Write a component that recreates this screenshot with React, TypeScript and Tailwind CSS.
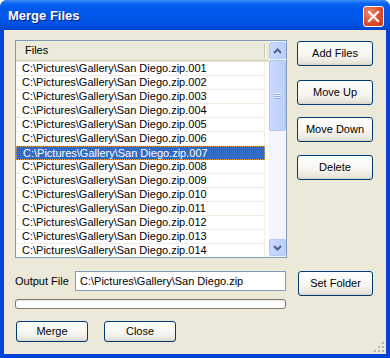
import React from "react";

const rows = Array.from({ length: 14 }, (_, i) => `C:\\Pictures\\Gallery\\San Diego.zip.${String(i + 1).padStart(3, "0")}`);

function XPButton({ label, className }: { label: string; className: string }) {
  return (
    <div
      className={`flex items-center justify-center rounded-[3px] border border-[#003c74] bg-[linear-gradient(to_bottom,#ffffff_0%,#f6f5f0_60%,#e8e5da_90%,#d6d0c5_100%)] text-[11px] text-black ${className}`}
    >
      {label}
    </div>
  );
}

export default function App() {
  return (
    <div
      className="flex h-[358px] w-[390px] flex-col overflow-hidden rounded-t-[7px] bg-[#0542d8]"
      style={{ fontFamily: '"Liberation Sans", Arial, sans-serif' }}
    >
      {/* Title bar */}
      <div className="relative flex h-[30px] shrink-0 items-center rounded-t-[7px] bg-[linear-gradient(to_bottom,#3c8ef8_0%,#0a62f0_12%,#0058ee_30%,#0056e8_65%,#0050e0_85%,#0043cf_100%)] pl-[8px]">
        <span className="pt-[1px] text-[13px] font-bold text-white [text-shadow:1px_1px_0_#0a1e8a]">Merge Files</span>
        <div className="absolute right-[6px] top-[6px] flex h-[21px] w-[21px] items-center justify-center rounded-[3px] border border-white bg-[radial-gradient(circle_at_30%_30%,#f08a6a_0%,#e0522e_50%,#c4381a_100%)]">
          <svg width="13" height="13" viewBox="0 0 13 13">
            <path d="M2 2 L11 11 M11 2 L2 11" stroke="white" strokeWidth="2.2" strokeLinecap="square" />
          </svg>
        </div>
      </div>
      {/* Body */}
      <div className="relative mx-[4px] mb-[4px] flex flex-1 flex-col bg-[#ece9d8] pl-[11px] pt-[10px]">
        <div className="flex">
          {/* List */}
          <div className="relative flex h-[218px] w-[272px] border border-[#7f9db9] bg-white">
            <div className="flex flex-1 flex-col overflow-hidden">
              <div className="relative flex h-[21px] shrink-0 items-center border-b-[3px] border-[#e2decd] bg-[#ebeadb] pl-[9px] text-[11px] text-black">
                <span className="mt-[1px]">Files</span>
                <div className="absolute left-[248px] top-[3px] h-[14px] w-[1px] bg-[#c7c5b2]" />
                <div className="absolute left-[249px] top-[3px] h-[14px] w-[1px] bg-white" />
              </div>
              {rows.map((r, i) => (
                <div key={r} className="flex h-[14px] shrink-0">
                  <div
                    className={`flex w-[249px] items-center pl-[6px] text-[11px] leading-none ${
                      i === 6
                        ? "border border-dotted border-[#e0a050] bg-[#316ac5] pl-[5px] text-white"
                        : "border-b border-r border-[#f1efe2] text-black"
                    }`}
                  >
                    {r}
                  </div>
                </div>
              ))}
            </div>
            {/* Scrollbar */}
            <div className="flex w-[17px] shrink-0 flex-col bg-[#f5f5fb] pb-[1px] pt-[1px]">
              <div className="flex h-[17px] items-center justify-center rounded-[2px] border border-[#b6cbf8] bg-[linear-gradient(to_right,#c8d8fd,#bccffb)]">
                <svg width="9" height="6" viewBox="0 0 9 6">
                  <path d="M1 5 L4.5 1.5 L8 5" stroke="#4d6185" strokeWidth="2" fill="none" />
                </svg>
              </div>
              <div className="mt-[1px] flex h-[71px] items-center justify-center rounded-[2px] border border-[#adc5f6] bg-[linear-gradient(to_right,#c9d9fd,#bdd0fb)]">
                <svg width="7" height="8" viewBox="0 0 7 8">
                  <path d="M0 1.5 H7 M0 3.5 H7 M0 5.5 H7" stroke="#eef3fe" strokeWidth="1" />
                  <path d="M0 2.5 H7 M0 4.5 H7 M0 6.5 H7" stroke="#8fb0f2" strokeWidth="1" />
                </svg>
              </div>
              <div className="flex-1" />
              <div className="flex h-[17px] items-center justify-center rounded-[2px] border border-[#b6cbf8] bg-[linear-gradient(to_right,#c8d8fd,#bccffb)]">
                <svg width="9" height="6" viewBox="0 0 9 6">
                  <path d="M1 1 L4.5 4.5 L8 1" stroke="#4d6185" strokeWidth="2" fill="none" />
                </svg>
              </div>
            </div>
          </div>
          {/* Buttons */}
          <div className="ml-[10px] flex w-[76px] flex-col">
            <XPButton label="Add Files" className="mt-[1px] h-[25px]" />
            <XPButton label="Move Up" className="mt-[14px] h-[25px]" />
            <XPButton label="Move Down" className="mt-[12px] h-[25px]" />
            <XPButton label="Delete" className="mt-[13px] h-[25px]" />
          </div>
        </div>
        {/* Output row */}
        <div className="mt-[13px] flex">
          <div className="flex w-[272px] items-start">
            <div className="flex h-[20px] w-[60px] items-center text-[11px] text-black">Output File</div>
            <div className="flex h-[20px] w-[211px] items-center border border-[#7f9db9] bg-white pl-[4px] text-[11px] text-black">
              {"C:\\Pictures\\Gallery\\San Diego.zip"}
            </div>
          </div>
          <XPButton label="Set Folder" className="ml-[11px] h-[25px] w-[75px]" />
        </div>
        <div className="mt-[3px] h-[10px] w-[271px] rounded-[3px] border border-[#7a7a7a] bg-white shadow-[inset_0_1px_0_#e8e8e8]" />
        <div className="mt-[12px] flex">
          <XPButton label="Merge" className="ml-[1px] h-[21px] w-[72px]" />
          <XPButton label="Close" className="ml-[16px] h-[21px] w-[72px]" />
        </div>
        {/* Gripper */}
        <svg className="absolute bottom-[1px] right-[1px]" width="12" height="12" viewBox="0 0 12 12">
          {[
            [9, 1],
            [5, 5],
            [9, 5],
            [1, 9],
            [5, 9],
            [9, 9],
          ].map(([x, y]) => (
            <rect key={`${x}-${y}`} x={x} y={y} width="2" height="2" fill="#b9b5a3" />
          ))}
        </svg>
      </div>
    </div>
  );
}
